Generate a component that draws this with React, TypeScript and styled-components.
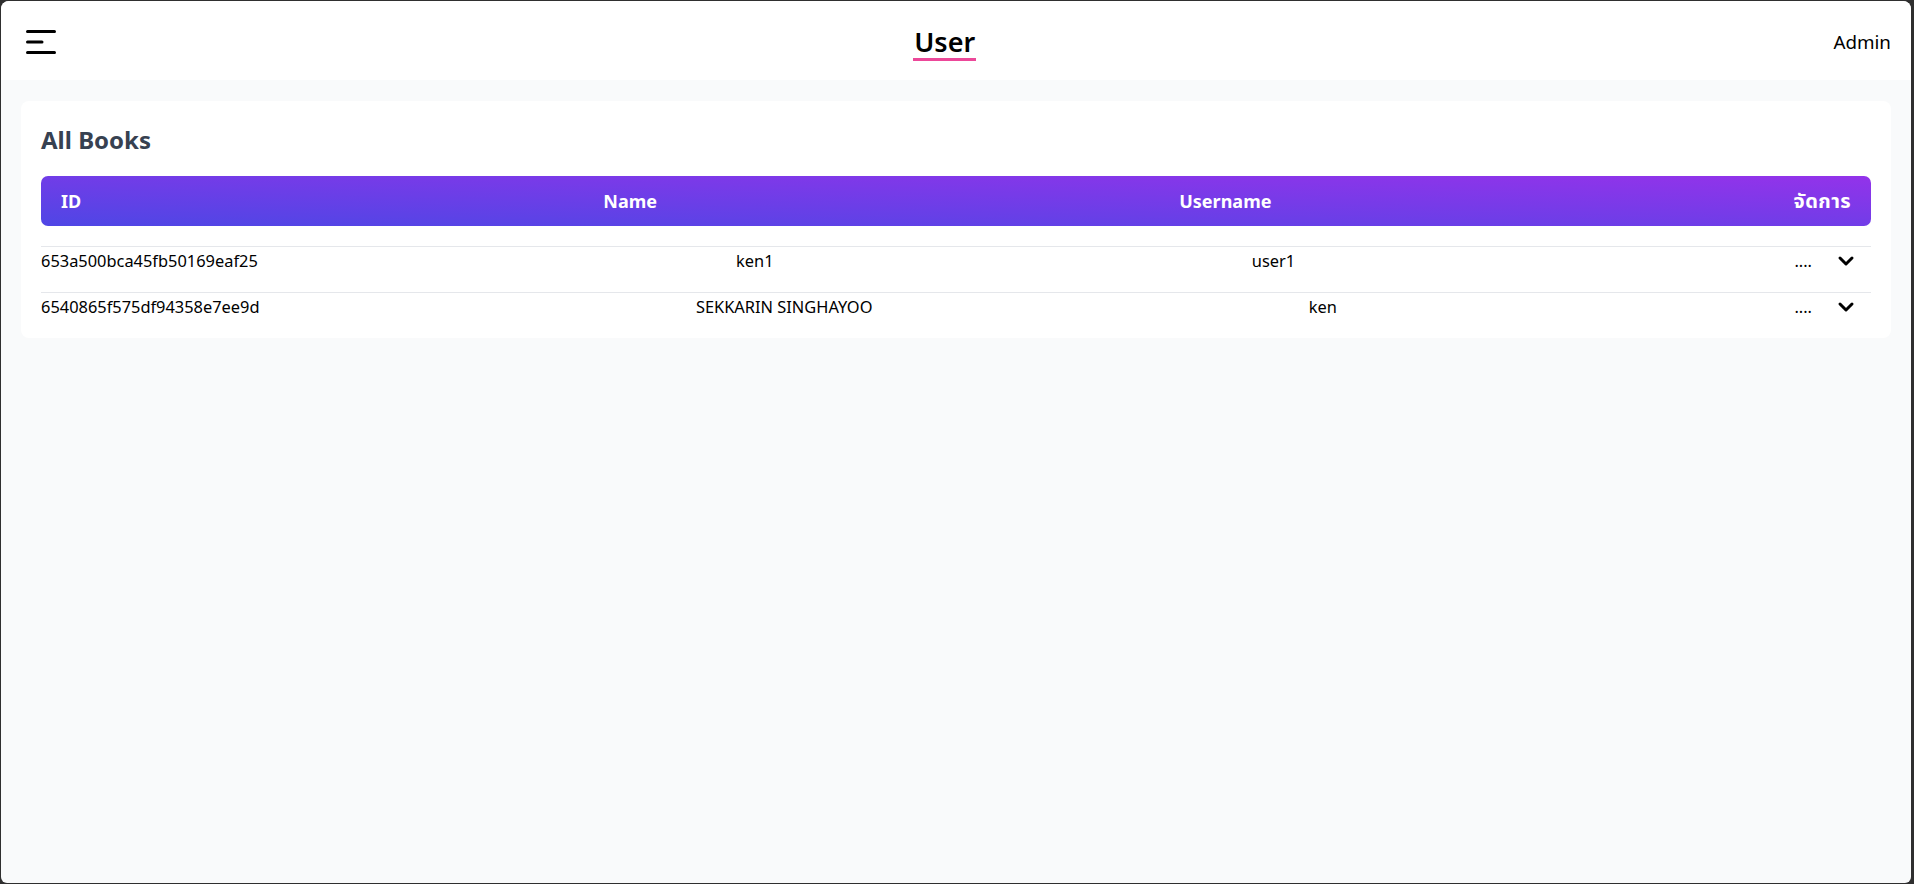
import React from 'react'
import styled, { createGlobalStyle } from 'styled-components'

const GlobalStyle = createGlobalStyle`
  html, body {
    margin: 0;
    padding: 0;
    height: 100%;
  }
  body {
    background: #2f2f2f;
    padding: 1px 3px 0 1px;
    box-sizing: border-box;
    font-family: 'Noto Sans', 'Noto Sans Thai', 'Leelawadee UI', 'DejaVu Sans', sans-serif;
    color: #000;
  }
  #root {
    height: 100%;
  }
`

const Frame = styled.div`
  min-height: calc(100vh - 2px);
  background: #f9fafb;
  border-radius: 8px 8px 6px 6px;
  overflow: hidden;
  display: flex;
  flex-direction: column;
`

const TopBar = styled.header`
  height: 79px;
  background: #fff;
  display: flex;
  align-items: center;
  justify-content: space-between;
  padding: 0 20px 0 25px;
`

const MenuButton = styled.button`
  border: 0;
  background: none;
  padding: 0;
  margin-top: 2px;
  display: flex;
  cursor: pointer;
  color: #000;
`

const PageTitle = styled.h1`
  margin: 4px 0 0;
  font-size: 27px;
  font-weight: 600;
  line-height: 33px;
  border-bottom: 3px solid #ec4899;
  padding: 0 1px;
`

const UserName = styled.span`
  margin-top: 2px;
  font-size: 18.8px;
  line-height: 28px;
`

const Main = styled.main`
  flex: 1;
  padding: 21px 20px;
`

const Card = styled.section`
  background: #fff;
  border-radius: 8px;
  padding: 23px 20px 0;
`

const CardTitle = styled.h2`
  margin: 0 0 20px;
  font-size: 24px;
  line-height: 32px;
  font-weight: 700;
  color: #374151;
`

const HeadRow = styled.div`
  display: flex;
  justify-content: space-between;
  align-items: center;
  padding: 11px 20px;
  border-radius: 7px;
  background: linear-gradient(to top right, #4f46e5, #9333ea);
  color: #fff;
  font-size: 18px;
  line-height: 28px;
  font-weight: 700;
  margin-bottom: 20px;
`

const HeadCell = styled.span<{ $thai?: boolean }>`
  font-size: ${({ $thai }) => ($thai ? '20px' : '18px')};
  letter-spacing: ${({ $thai }) => ($thai ? '0.4px' : '0')};
`

const Row = styled.div`
  display: flex;
  justify-content: space-between;
  align-items: flex-start;
  border-top: 1px solid #e5e7eb;
  padding: 2px 0 19px;
  font-size: 16.4px;
  line-height: 24px;
  color: #000;
`

const Actions = styled.div`
  display: flex;
  align-items: flex-start;
  gap: 22px;
  padding: 0 13px 0 21px;
`

const IconButton = styled.button`
  border: 0;
  background: none;
  padding: 0;
  display: flex;
  cursor: pointer;
  color: #000;
`

const users = [
  { id: '653a500bca45fb50169eaf25', name: 'ken1', username: 'user1' },
  { id: '6540865f575df94358e7ee9d', name: 'SEKKARIN SINGHAYOO', username: 'ken' },
]

const MenuIcon = () => (
  <svg width="30" height="28" viewBox="0 0 30 28" fill="none" stroke="currentColor" strokeWidth="3" strokeLinecap="round">
    <path d="M1.5 3.5h27" />
    <path d="M1.5 14h14.5" />
    <path d="M1.5 24.5h27" />
  </svg>
)

const ChevronDown = () => (
  <svg width="24" height="24" viewBox="0 0 24 24" fill="none" stroke="currentColor" strokeWidth="3" strokeLinecap="round" strokeLinejoin="round">
    <path d="m6 9 6 6 6-6" />
  </svg>
)

export default function App() {
  return (
    <>
      <GlobalStyle />
      <Frame>
        <TopBar>
          <MenuButton aria-label="menu">
            <MenuIcon />
          </MenuButton>
          <PageTitle>User</PageTitle>
          <UserName>Admin</UserName>
        </TopBar>
        <Main>
          <Card>
            <CardTitle>All Books</CardTitle>
            <HeadRow>
              <HeadCell>ID</HeadCell>
              <HeadCell>Name</HeadCell>
              <HeadCell>Username</HeadCell>
              <HeadCell $thai>จัดการ</HeadCell>
            </HeadRow>
            {users.map((u) => (
              <Row key={u.id}>
                <span>{u.id}</span>
                <span>{u.name}</span>
                <span>{u.username}</span>
                <Actions>
                  <span>....</span>
                  <IconButton aria-label="more">
                    <ChevronDown />
                  </IconButton>
                </Actions>
              </Row>
            ))}
          </Card>
        </Main>
      </Frame>
    </>
  )
}
